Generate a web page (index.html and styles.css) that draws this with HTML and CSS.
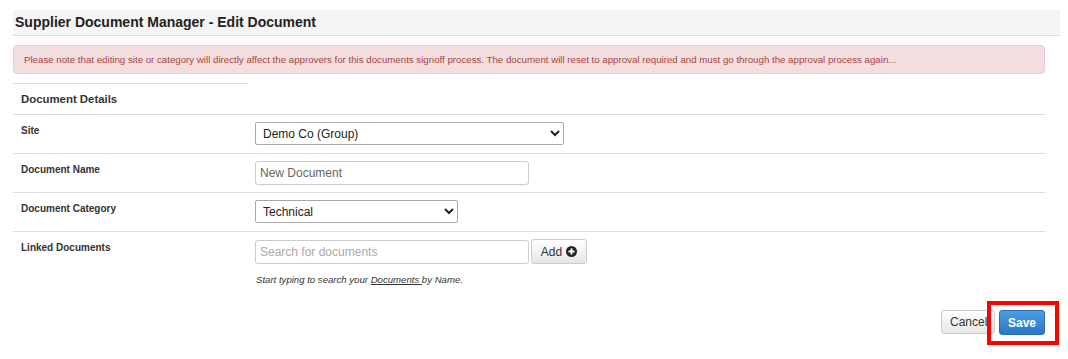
FILE: index.html
```html
<!DOCTYPE html>
<html>
<head>
<meta charset="utf-8">
<title>Supplier Document Manager - Edit Document</title>
<link rel="stylesheet" href="styles.css">
</head>
<body>
<div class="page">
  <div class="header">Supplier Document Manager - Edit Document</div>
  <div class="content">
    <div class="alert">Please note that editing site or category will directly affect the approvers for this documents signoff process. The document will reset to approval required and must go through the approval process again...</div>
    <div class="section-title">Document Details</div>
    <div class="rows">
      <div class="row">
        <div class="label">Site</div>
        <div class="field">
          <select class="sel sel-site"><option>Demo Co (Group)</option></select>
        </div>
      </div>
      <div class="row">
        <div class="label">Document Name</div>
        <div class="field">
          <input class="inp inp-name" type="text" placeholder="New Document">
        </div>
      </div>
      <div class="row">
        <div class="label">Document Category</div>
        <div class="field">
          <select class="sel sel-cat"><option>Technical</option></select>
        </div>
      </div>
      <div class="row row-last">
        <div class="label">Linked Documents</div>
        <div class="field">
          <div class="search-line">
            <input class="inp inp-search" type="text" placeholder="Search for documents">
            <button class="btn btn-add">Add
              <svg class="plus" width="11" height="11" viewBox="0 0 16 16"><circle cx="8" cy="8" r="8" fill="#222"/><rect x="3.5" y="6.6" width="9" height="2.8" fill="#fff"/><rect x="6.6" y="3.5" width="2.8" height="9" fill="#fff"/></svg>
            </button>
          </div>
          <div class="help">Start typing to search your <u>Documents </u>by Name.</div>
        </div>
      </div>
    </div>
    <div class="footer">
      <button class="btn btn-cancel">Cancel</button>
      <span class="save-wrap">
        <button class="btn btn-save">Save</button>
        <span class="highlight"></span>
      </span>
    </div>
  </div>
</div>
</body>
</html>
```
FILE: styles.css
```css
* { box-sizing: border-box; }
html, body { margin: 0; padding: 0; background: #fff; }
body { font-family: "Liberation Sans", Arial, sans-serif; color: #333; }
.page { padding: 10px 8px 24px 13px; }
.header {
  height: 26px;
  background: #f5f5f5;
  border-bottom: 1px solid #ddd;
  font-size: 14px;
  font-weight: bold;
  color: #222;
  padding: 4px 0 0 2px;
}
.content { margin-right: 15px; }
.alert {
  margin-top: 9px;
  height: 29px;
  background: #f2dede;
  border: 1px solid #ebccd1;
  border-radius: 4px;
  color: #a94442;
  font-size: 9.7px;
  display: flex;
  align-items: center;
  padding: 0 10px;
  white-space: nowrap;
  overflow: hidden;
}
.section-title {
  margin-top: 9px;
  width: 235px;
  border-top: 1px solid #ddd;
  height: 31px;
  font-size: 11.4px;
  font-weight: bold;
  color: #333;
  padding: 9px 0 0 8px;
}
.row {
  display: grid;
  grid-template-columns: 242px 1fr;
  border-top: 1px solid #ddd;
  height: 39px;
}
.row-last { height: 70px; }
.label {
  font-size: 10px;
  font-weight: bold;
  color: #333;
  padding: 10px 0 0 8px;
}
.field { padding-top: 7px; }
.sel {
  height: 23px;
  font-family: "Liberation Sans", Arial, sans-serif;
  font-size: 12px;
  color: #222;
  border: 1px solid #a9a9a9;
  border-radius: 2px;
  background: #fff;
  padding: 0 3px;
}
.sel-site { width: 309px; }
.sel-cat { width: 203px; }
.inp {
  height: 24px;
  font-family: "Liberation Sans", Arial, sans-serif;
  font-size: 12px;
  border: 1px solid #ccc;
  border-radius: 3px;
  padding: 0 4px;
  color: #555;
  background: #fff;
}
.inp::placeholder { color: #999; }
.inp-name { width: 274px; }
.inp-name::placeholder { color: #666; }
.inp-search { width: 274px; }
.inp-search::placeholder { color: #aaa; }
.search-line { display: flex; gap: 2px; align-items: center; }
.btn {
  font-family: "Liberation Sans", Arial, sans-serif;
  font-size: 12px;
  border-radius: 3px;
  cursor: pointer;
}
.btn-add {
  height: 25px;
  width: 56px;
  display: inline-flex;
  align-items: center;
  justify-content: center;
  gap: 4px;
  color: #333;
  border: 1px solid #ccc;
  background: linear-gradient(#fff, #e6e6e6);
  padding: 0 6px;
}
.plus { display: block; }
.help {
  margin-top: 10px;
  margin-left: 1px;
  font-size: 9.6px;
  font-style: italic;
  color: #333;
}
.footer {
  display: flex;
  justify-content: flex-end;
  gap: 4px;
  margin-top: 9px;
}
.btn-cancel {
  height: 24px;
  width: 54px;
  color: #333;
  border: 1px solid #ccc;
  background: linear-gradient(#fff, #e6e6e6);
  padding: 0;
  text-align: left;
  padding-left: 8px;
}
.save-wrap { position: relative; display: inline-block; }
.btn-save {
  display: block;
  height: 25px;
  width: 46px;
  color: #fff;
  font-weight: bold;
  border: 1px solid #2b6fb5;
  background: linear-gradient(#4c9de2, #2a78c6);
  padding: 0;
}
.highlight {
  position: absolute;
  left: -12px;
  top: -9px;
  right: -14px;
  bottom: -10px;
  border: 4px solid #f00;
  pointer-events: none;
}
```
